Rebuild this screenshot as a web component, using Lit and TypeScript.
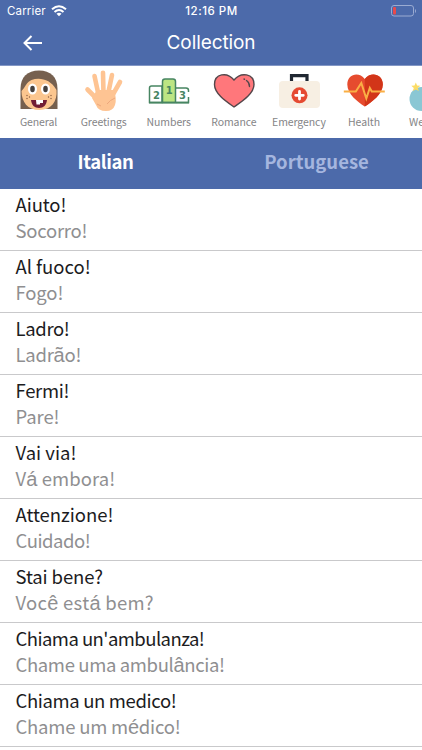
import { LitElement, html, css, svg } from "lit";
import { customElement, property } from "lit/decorators.js";

const icons: Record<string, unknown> = {
  General: svg`
    <g transform="translate(1.500 0)"><path d="M1 39V19C1 7 8 .5 19.500 .5S38 7 38 19V39Z" fill="#76604f"/>
    <path d="M2 21C6 17 7 12 12 10C20 7 31 9 37 20C38 31 32 40 20 40S2 32 2 21Z" fill="#fbc68f"/>
    <ellipse cx="13" cy="19" rx="4.500" ry="5.500" fill="#fff"/><ellipse cx="26" cy="19" rx="4.500" ry="5.500" fill="#fff"/>
    <ellipse cx="13" cy="19" rx="2.300" ry="3.300" fill="#45413f"/><ellipse cx="26" cy="19" rx="2.300" ry="3.300" fill="#45413f"/>
    <g fill="#895b3f"><circle cx="7.500" cy="25.500" r=".7"/><circle cx="10" cy="27" r=".7"/><circle cx="7.500" cy="28.500" r=".7"/><circle cx="31.500" cy="25.500" r=".7"/><circle cx="29" cy="27" r=".7"/><circle cx="31.500" cy="28.500" r=".7"/></g>
    <path d="M11.500 30H27.500C27 35 24 38 19.500 38S12 35 11.500 30Z" fill="#721e35"/>
    <path d="M16.500 30H23.500V33H20.500V34.500H17Z" fill="#fff"/></g>`,
  Greetings: svg`
    <g stroke="#fec493" stroke-width="4.600" stroke-linecap="round" fill="none">
      <path d="M16 27L11.500 6M20.500 24L20 2.700M25 24L29 5M29 26L37 12M15 30L4.500 19.500"/></g>
    <path d="M14 20L31 20Q34 29 32 35Q30 41 23 41Q15 41 13 35L9 28Z" fill="#fec493"/>
    <path d="M24 34Q27 30 32 28M14 34L18 36" fill="none" stroke="#eda77c" stroke-width="1"/>`,
  Numbers: svg`
    <g transform="translate(0 -2)"><path d="M1.500 34.500V20Q1.500 18 3.500 18H14V34.500Z" fill="#fff" stroke="#478562" stroke-width="1.500"/>
    <path d="M28 20H38Q40.500 20 40.500 22.500V24M40.500 29V34.500H28" fill="#fff" stroke="#478562" stroke-width="1.500"/>
    <path d="M14.500 34.500V13.500Q14.500 11 17 11H25Q27.500 11 27.500 13.500V34.500Z" fill="#bce583" stroke="#478562" stroke-width="1.500"/>
    <path d="M1 34.700H41" stroke="#478562" stroke-width="1.700"/>
    <g class="podium"><text x="5" y="31">2</text><text x="17.700" y="25.500">1</text><text x="31" y="31">3</text></g></g>`,
  Romance: svg`
    <path d="M21 37C14 32 1.500 24 1.500 14.500C1.500 3.500 14 1.500 21 10C28 1.500 41 3.500 41 14.500C41 24 28 32 21 37Z" fill="#ff777b" stroke="#54474b" stroke-width="1.400"/>
    <path d="M33.500 10.500Q36.500 12.500 36.500 16.500M31 9L31.600 9.300" fill="none" stroke="#54474b" stroke-width="1.400" stroke-linecap="round"/>`,
  Emergency: svg`
    <path d="M13.500 12V5.700H29V12" fill="none" stroke="#202832" stroke-width="3.200"/>
    <rect x="1" y="11" width="41" height="27" rx="4" fill="#f7efe3"/>
    <circle cx="21.500" cy="25.300" r="8" fill="#e54a32"/>
    <path d="M21.500 21.500V29M17.700 25.300H25.300" stroke="#fff" stroke-width="2.800" stroke-linecap="round"/>`,
  Health: svg`
    <g transform="translate(.8 0)"><path d="M21 36.500C14 32 3.500 24 3.500 14.500C3.500 4 15 1 21 9C27 1 39 4 39 14.500C39 24 28 32 21 36.500Z" fill="#e64b2e"/>
    <path d="M21 36.500V9C27 1 39 4 39 14.500C39 24 28 32 21 36.500Z" fill="#d23519"/>
    <path d="M0 21.500H12L17.500 13L22.500 28.500L26 18L28 21.500H41" fill="none" stroke="#faaf45" stroke-width="2"/></g>`,
  Weather: svg`
    <circle cx="13.500" cy="29" r="12" fill="#8ac7d4"/>
    <path d="M10 13L11.300 16L14.500 16.300L12 18.500L13 21.500L10 20L7 21.500L8 18.500L5.500 16.300L8.700 16Z" transform="translate(-2.200 -.5)" fill="#fbdc66"/>`,
};

interface Line {
  text: string;
  tracking: number;
}

const line = (text: string, tracking: number): Line => ({ text, tracking });

const phrases: [Line, Line][] = [
  [line("Aiuto!", -0.1), line("Socorro!", -0.25)],
  [line("Al fuoco!", -0.02), line("Fogo!", -0.15)],
  [line("Ladro!", -0.35), line("Ladrão!", -0.25)],
  [line("Fermi!", -0.3), line("Pare!", -0.1)],
  [line("Vai via!", 0), line("Vá embora!", 0.07)],
  [line("Attenzione!", -0.05), line("Cuidado!", -0.45)],
  [line("Stai bene?", -0.12), line("Você está bem?", 0.27)],
  [line("Chiama un'ambulanza!", -0.55), line("Chame uma ambulância!", -0.36)],
  [line("Chiama un medico!", -0.36), line("Chame um médico!", -0.22)],
];

@customElement("category-item")
export class CategoryItem extends LitElement {
  @property() name = "";
  static styles = css`
    :host { display: flex; flex-direction: column; align-items: center; width: 65.1px; flex: none; }
    svg { width: 42px; height: 42px; display: block; }
    .label { font: 10.5px/16px "Noto Sans CJK SC", sans-serif; color: #858587; margin-top: 2px; white-space: nowrap; letter-spacing: -.1px; }
    .podium { font: bold 10px "DejaVu Sans", sans-serif; fill: #478562; }
  `;
  render() {
    return html`<svg viewBox="0 0 42 42">${icons[this.name]}</svg><span class="label">${this.name}</span>`;
  }
}

@customElement("phrase-row")
export class PhraseRow extends LitElement {
  @property({ attribute: false }) source!: Line;
  @property({ attribute: false }) translation!: Line;
  static styles = css`
    :host { display: block; box-sizing: border-box; height: 62.05px; padding: 2px 15.5px 0; border-bottom: 1px solid #c9c9cb; font: 18.5px/26px "Noto Sans CJK SC", sans-serif; white-space: nowrap; }
    .source, .translation { height: 26px; }
    .source { color: #1c1c1e; }
    .translation { color: #8f8f91; }
    .accent { font: 20px/1 "Liberation Sans", sans-serif; }
  `;
  render() {
    const { source, translation } = this;
    return html`<div class="source" style="letter-spacing:${source.tracking}px">${source.text}</div>
      <div class="translation" style="letter-spacing:${translation.tracking}px">${translation.text.split(/([^\x00-\x7f])/).map((part, i) => (i % 2 ? html`<span class="accent">${part}</span>` : part))}</div>`;
  }
}

@customElement("app-root")
export class AppRoot extends LitElement {
  static styles = css`
    :host { display: flex; flex-direction: column; height: 750px; overflow: hidden; background: #fff; }
    .header { height: 65px; flex: none; background: #4c6aaa; color: #fff; border-bottom: 1px solid #8397c5; }
    .status { display: grid; grid-template-columns: 1fr auto 1fr; height: 22px; align-items: center; padding: 0 6px 0 7px; font: 11.5px/22px Inter, sans-serif; }
    .carrier { display: flex; align-items: center; gap: 5px; letter-spacing: .15px; }
    .wifi { width: 16px; height: 12px; }
    .time { font-weight: 500; letter-spacing: .5px; }
    .battery { width: 25px; height: 12px; justify-self: end; }
    .nav { display: grid; grid-template-columns: 60px 1fr 60px; height: 43px; align-items: center; }
    .back { width: 20px; height: 16px; margin: -2px 0 0 23px; }
    .title { text-align: center; font: 19px/24px Inter, sans-serif; margin-top: -1px; letter-spacing: -.1px; }
    .categories { display: flex; height: 68px; flex: none; padding: 4px 0 0 6px; overflow: hidden; }
    .tabs { display: grid; grid-template-columns: 1fr 1fr; height: 51px; flex: none; background: #4c6aaa; color: #a5b6df; font: bold 18.5px/47px "Noto Sans CJK SC", sans-serif; text-align: center; }
    .active { color: #fff; letter-spacing: -.4px; }
  `;
  render() {
    return html`
      <header class="header">
        <div class="status">
          <span class="carrier">Carrier
            <svg class="wifi" viewBox="0 0 16 12"><g fill="none" stroke="#fff" stroke-width="2"><path d="M1 4.300Q8-1.800 15 4.300M3.500 7Q8 3 12.500 7"/></g><path d="M5.500 8.700Q8 6.900 10.500 8.700L8 11.300Z" fill="#fff"/></svg>
          </span>
          <span class="time">12:16 PM</span>
          <svg class="battery" viewBox="0 0 25 12"><rect x=".5" y=".5" width="22" height="10.500" rx="2.500" fill="none" stroke="#9aabd2"/><rect x="2" y="2" width="3" height="7.500" rx="1" fill="#e94a4b"/><path d="M24 4V8Q25 7.500 25 6T24 4Z" fill="#9aabd2"/></svg>
        </div>
        <div class="nav">
          <svg class="back" viewBox="0 0 20 16"><path d="M8.500 1L1.500 8L8.500 15M1.500 8H19" fill="none" stroke="#fff" stroke-width="2"/></svg>
          <span class="title">Collection</span>
        </div>
      </header>
      <nav class="categories">${Object.keys(icons).map((name) => html`<category-item name=${name}></category-item>`)}</nav>
      <div class="tabs"><span class="active">Italian</span><span>Portuguese</span></div>
      <main>${phrases.map(([a, b]) => html`<phrase-row .source=${a} .translation=${b}></phrase-row>`)}</main>
    `;
  }
}
